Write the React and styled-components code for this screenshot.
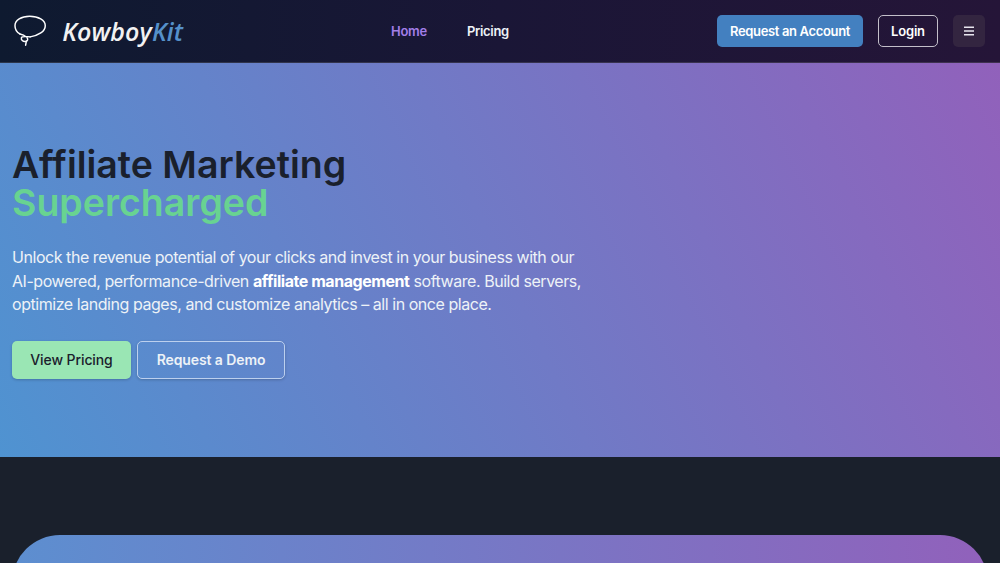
import React from "react";
import styled, { createGlobalStyle } from "styled-components";

const GlobalStyle = createGlobalStyle`
  html, body {
    margin: 0;
    height: 100%;
    overflow: hidden;
    background: #1a202c;
    font-family: "Inter", "Noto Sans", sans-serif;
  }
  * { box-sizing: border-box; }
`;

function Lasso() {
  return (
    <svg width="34" height="34" viewBox="0 0 34 34" fill="none" stroke="#fff" strokeWidth="1.5" strokeLinecap="round">
      <path d="M6 20C2.8 18 1 15 1 11.5C1 6 7.5 2 16 2C25 2 32 6 32 11.5C32 17.5 25 21.5 16.5 23" />
      <path d="M6 20C8.5 20.4 11 21.6 13 23.4C14.8 25.2 14.2 27.4 11.8 27.7C9 28 7 26 7.6 23.8C8 22.5 9.8 22.2 16.5 23" />
      <path d="M12.7 27.2L11.9 31.5" />
    </svg>
  );
}

export default function App() {
  return (
    <Page>
      <GlobalStyle />
      <Navbar>
        <Brand>
          <Lasso />
          <BrandName>
            Kowboy<BrandAccent>Kit</BrandAccent>
          </BrandName>
        </Brand>
        <NavLinks>
          <NavLink $active>Home</NavLink>
          <NavLink>Pricing</NavLink>
        </NavLinks>
        <NavActions>
          <RequestButton>Request an Account</RequestButton>
          <LoginButton>Login</LoginButton>
          <MenuButton aria-label="Menu">
            <svg width="12" height="10" viewBox="0 0 12 10" fill="none" stroke="#e8e6ee" strokeWidth="1.4">
              <path d="M1 1.2H11M1 5H11M1 8.8H11" />
            </svg>
          </MenuButton>
        </NavActions>
      </Navbar>
      <Hero>
        <Title>
          Affiliate Marketing
          <Highlight>Supercharged</Highlight>
        </Title>
        <Lead>
          Unlock the revenue potential of your clicks and invest in your business with our
          AI-powered, performance-driven <strong>affiliate management</strong> software. Build
          servers, optimize landing pages, and customize analytics – all in once place.
        </Lead>
        <HeroActions>
          <PrimaryButton>View Pricing</PrimaryButton>
          <OutlineButton>Request a Demo</OutlineButton>
        </HeroActions>
      </Hero>
      <Lower>
        <Panel />
      </Lower>
    </Page>
  );
}

const Page = styled.div`
  height: 563px;
  overflow: hidden;
  background: #1a202c;
`;

const Navbar = styled.header`
  height: 63px;
  padding: 0 15px 0 14px;
  display: flex;
  justify-content: space-between;
  align-items: center;
  background: linear-gradient(90deg, #0e1a30 0%, #1a1636 50%, #251538 100%);
  border-bottom: 1px solid rgba(255, 255, 255, 0.12);
`;

const Brand = styled.div`
  width: 169px;
  display: flex;
  align-items: center;
  gap: 15px;
  white-space: nowrap;
`;

const BrandName = styled.span`
  font-family: "Open Sans", sans-serif;
  font-size: 25px;
  font-weight: 600;
  font-style: italic;
  letter-spacing: 0.1px;
  color: #f2f2f2;
`;

const BrandAccent = styled.span`
  color: #5590ca;
`;

const NavLinks = styled.nav`
  display: flex;
  gap: 40px;
`;

const NavLink = styled.a`
  font-size: 13px;
  font-weight: 600;
  letter-spacing: -0.3px;
  color: ${(props) => (props.$active ? "#a27ee8" : "#edf2f7")};
`;

const NavActions = styled.div`
  display: flex;
  align-items: center;
`;

const BaseButton = styled.button`
  font-family: inherit;
  font-weight: 600;
  border-radius: 5px;
  cursor: pointer;
  padding: 0;
`;

const RequestButton = styled(BaseButton)`
  width: 146px;
  height: 32px;
  font-size: 13px;
  letter-spacing: -0.35px;
  color: #fff;
  background: #4380c0;
  border: none;
  margin-right: 15px;
`;

const LoginButton = styled(BaseButton)`
  width: 60px;
  height: 32px;
  font-size: 13px;
  letter-spacing: -0.2px;
  color: #fff;
  background: transparent;
  border: 1px solid #c3bfca;
  margin-right: 15px;
`;

const MenuButton = styled(BaseButton)`
  width: 32px;
  height: 32px;
  display: flex;
  align-items: center;
  justify-content: center;
  background: #332540;
  border: none;
`;

const Hero = styled.section`
  height: 394px;
  padding: 83px 12px 0;
  background: linear-gradient(65deg, #4f93d1, #9161bb);
`;

const Title = styled.h1`
  margin: 0;
  font-size: 37.5px;
  line-height: 38px;
  font-weight: 600;
  color: #1a202c;
`;

const Highlight = styled.span`
  display: block;
  color: #68d391;
`;

const Lead = styled.p`
  width: 585px;
  margin: 24px 0 0;
  font-size: 16px;
  line-height: 23.5px;
  letter-spacing: -0.45px;
  color: #edf2f7;

  strong {
    font-weight: 700;
    color: #fff;
  }
`;

const HeroActions = styled.div`
  display: flex;
  gap: 6px;
  margin-top: 24px;
`;

const PrimaryButton = styled(BaseButton)`
  width: 119px;
  height: 38px;
  font-size: 14px;
  font-weight: 500;
  letter-spacing: -0.1px;
  color: #1a202c;
  background: #9ae6b4;
  border: none;
  box-shadow: 0 1px 3px rgba(0, 0, 0, 0.2);
`;

const OutlineButton = styled(BaseButton)`
  width: 148px;
  height: 38px;
  font-size: 14px;
  letter-spacing: -0.1px;
  color: #edf2f7;
  background: transparent;
  border: 1px solid #bcd0ee;
  box-shadow: 0 1px 3px rgba(0, 0, 0, 0.2);
`;

const Lower = styled.section`
  padding: 78px 12px 0;
`;

const Panel = styled.div`
  height: 300px;
  border-radius: 48px 48px 0 0;
  background: linear-gradient(88deg, #5c8fd0, #9161bb);
`;
